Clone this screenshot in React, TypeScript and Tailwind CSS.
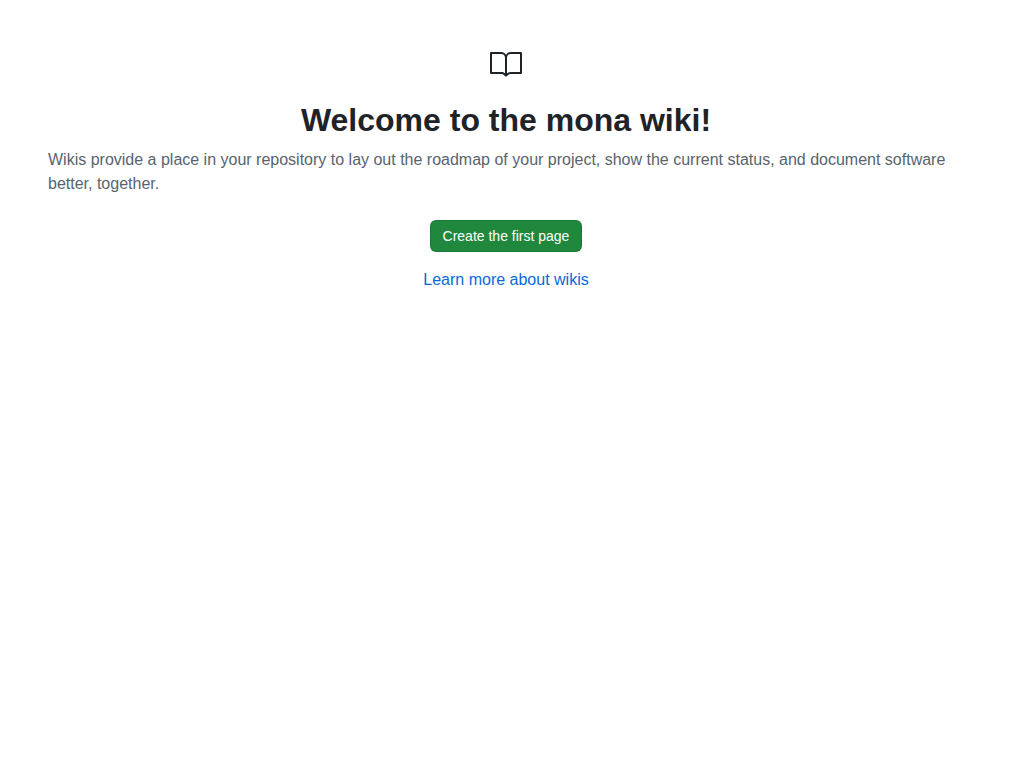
export default function App() {
  return (
    <main className="flex min-h-screen flex-col bg-white px-12 pt-12 font-['Liberation_Sans',sans-serif] text-base text-[#1f2328]">
      <section className="flex flex-col items-center">
        <svg
          aria-hidden="true"
          viewBox="0 0 24 24"
          width="32"
          height="32"
          fill="currentColor"
          className="mb-4 h-8 w-8"
        >
          <path d="M0 3.75A.75.75 0 0 1 .75 3h7.497c1.566 0 2.945.8 3.751 2.014A4.495 4.495 0 0 1 15.75 3h7.5a.75.75 0 0 1 .75.75v15.063a.752.752 0 0 1-.755.75l-7.682-.052a3 3 0 0 0-2.142.878l-.89.891a.75.75 0 0 1-1.061 0l-.902-.901a2.996 2.996 0 0 0-2.121-.879H.75a.75.75 0 0 1-.75-.75Zm12.75 15.232a4.503 4.503 0 0 1 2.823-.971l6.927.047V4.5h-6.75a3 3 0 0 0-3 3ZM11.247 7.497a3 3 0 0 0-3-2.997H1.5V18h6.947c1.018 0 2.006.346 2.803.98Z" />
        </svg>
        <h1 className="mb-1 text-center text-[32px] leading-12 font-bold">Welcome to the mona wiki!</h1>
        <p className="w-full text-[#59636e]">
          Wikis provide a place in your repository to lay out the roadmap of your project, show the
          current status, and document software better, together.
        </p>
        <button
          type="button"
          className="mt-6 h-8 cursor-pointer rounded-md border border-[#1f232826] bg-[#1f883d] px-3 text-sm text-white"
        >
          Create the first page
        </button>
        <a href="#about-wikis" className="mt-4 text-[#0969da] hover:underline">
          Learn more about wikis
        </a>
      </section>
    </main>
  );
}
